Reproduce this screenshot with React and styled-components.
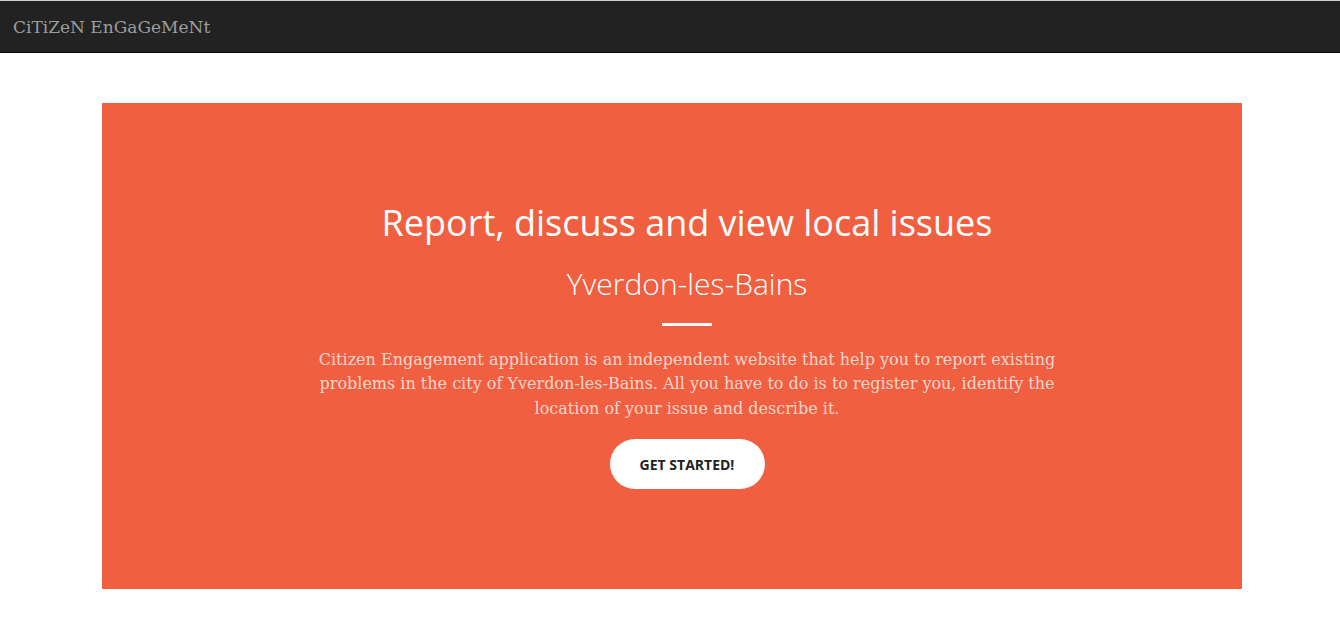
import React from "react"
import styled, { createGlobalStyle } from "styled-components"

const GlobalStyle = createGlobalStyle`
  html, body {
    margin: 0;
    padding: 0;
    background: #fff;
  }
  body {
    font-family: "DejaVu Serif", "Liberation Serif", serif;
  }
`

const Nav = styled.nav`
  height: 51px;
  background: #222;
  border-top: 1px solid #ccc;
  border-bottom: 1px solid #080808;
  display: flex;
  align-items: center;
  padding: 0 13px;
`

const Brand = styled.a`
  color: #9d9d9d;
  font-family: "DejaVu Serif", "Liberation Serif", serif;
  font-size: 17px;
  text-decoration: none;
`

const Main = styled.main`
  display: flex;
  justify-content: center;
  padding: 50px 0 0 4px;
`

const Hero = styled.section`
  box-sizing: border-box;
  width: 1140px;
  height: 486px;
  padding-left: 30px;
  background: #f05f40;
  color: #fff;
  display: flex;
  flex-direction: column;
  align-items: center;
  justify-content: center;
  text-align: center;
`

const Title = styled.h1`
  margin: 0;
  font-family: "Open Sans", sans-serif;
  font-weight: 400;
  font-size: 36px;
  line-height: 1.1;
`

const Subtitle = styled.h2`
  margin: 24px 0 0;
  font-family: "Open Sans", sans-serif;
  font-weight: 300;
  font-size: 30px;
  line-height: 1.1;
`

const Divider = styled.hr`
  width: 50px;
  height: 3px;
  border: none;
  background: #fff;
  margin: 23px 0 22px;
`

const Lead = styled.p`
  margin: 0 0 18px;
  max-width: 750px;
  color: rgba(255, 255, 255, 0.74);
  font-size: 16px;
  line-height: 24.5px;
`

const Button = styled.a`
  display: inline-flex;
  align-items: center;
  justify-content: center;
  width: 155px;
  height: 50px;
  border-radius: 300px;
  background: #fff;
  color: #222;
  font-family: "Open Sans", sans-serif;
  font-weight: 700;
  font-size: 14px;
  text-transform: uppercase;
  text-decoration: none;
`

export default function App() {
  return (
    <>
      <GlobalStyle />
      <Nav>
        <Brand href="#">CiTiZeN EnGaGeMeNt</Brand>
      </Nav>
      <Main>
        <Hero>
          <Title>Report, discuss and view local issues</Title>
          <Subtitle>Yverdon-les-Bains</Subtitle>
          <Divider />
          <Lead>
            Citizen Engagement application is an independent website that help
            you to report existing problems in the city of Yverdon-les-Bains.
            All you have to do is to register you, identify the location of
            your issue and describe it.
          </Lead>
          <Button href="#">Get started!</Button>
        </Hero>
      </Main>
    </>
  )
}
